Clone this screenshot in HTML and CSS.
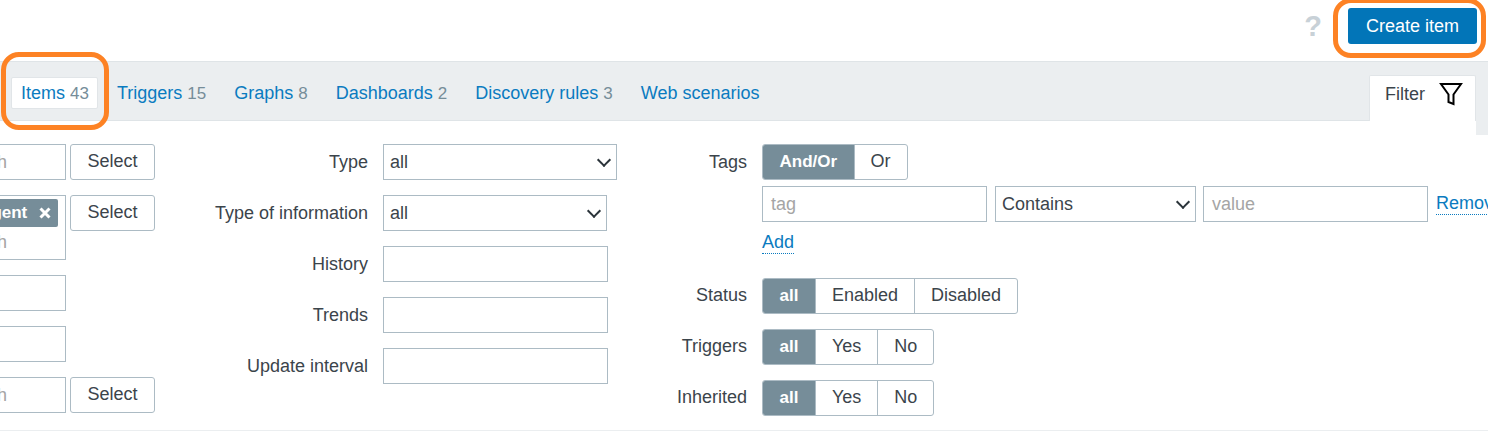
FILE: index.html
```html
<!doctype html>
<html lang="en">
<head>
	<meta charset="utf-8">
	<title>Items</title>
	<link rel="stylesheet" href="styles.css">
</head>
<body>
<header class="topbar">
	<span class="help">?</span>
	<button class="btn-create">Create item</button>
</header>

<nav class="tabs">
	<ul class="host-nav">
		<li class="selected"><a href="#">Items</a> <span>43</span></li>
		<li><a href="#">Triggers</a> <span>15</span></li>
		<li><a href="#">Graphs</a> <span>8</span></li>
		<li><a href="#">Dashboards</a> <span>2</span></li>
		<li><a href="#">Discovery rules</a> <span>3</span></li>
		<li><a href="#">Web scenarios</a></li>
	</ul>
	<div class="filter-tab">
		Filter
		<svg width="24" height="24" viewBox="0 0 24 24"><path d="M2 2h20l-7.500 10.500v9.500l-5-2v-7.500z" fill="none" stroke="#000" stroke-width="2"/></svg>
	</div>
</nav>

<main class="filter">
	<div class="col col-1">
		<div class="row">
			<div class="field">type here to search</div>
			<button class="btn">Select</button>
		</div>
		<div class="row row-multi">
			<div class="field field-multi">
				<span class="chip">Zabbix agent <svg width="12" height="12" viewBox="0 0 12 12"><path d="M1.500 1.500l9 9M10.500 1.500l-9 9" stroke="#fff" stroke-width="3"/></svg></span>
				<span class="ph">type here to search</span>
			</div>
			<button class="btn">Select</button>
		</div>
		<div class="row"><div class="field"></div></div>
		<div class="row"><div class="field"></div></div>
		<div class="row">
			<div class="field">type here to search</div>
			<button class="btn">Select</button>
		</div>
	</div>

	<div class="col col-2">
		<div class="row">
			<label>Type</label>
			<div class="field select select-type">all</div>
		</div>
		<div class="row">
			<label>Type of information</label>
			<div class="field select select-info">all</div>
		</div>
		<div class="row"><label>History</label><div class="field text"></div></div>
		<div class="row"><label>Trends</label><div class="field text"></div></div>
		<div class="row"><label>Update interval</label><div class="field text"></div></div>
	</div>

	<div class="col col-3">
		<div class="row row-tags">
			<label>Tags</label>
			<div class="seg"><span class="on">And/Or</span><span>Or</span></div>
		</div>
		<div class="tag-line">
			<div class="field tag-input ph">tag</div>
			<div class="field select select-op">Contains</div>
			<div class="field tag-input ph">value</div>
			<a class="dotted" href="#">Remove</a>
		</div>
		<div class="add-line"><a class="dotted" href="#">Add</a></div>
		<div class="row"><label>Status</label>
			<div class="seg"><span class="on">all</span><span>Enabled</span><span>Disabled</span></div>
		</div>
		<div class="row"><label>Triggers</label>
			<div class="seg"><span class="on">all</span><span>Yes</span><span>No</span></div>
		</div>
		<div class="row"><label>Inherited</label>
			<div class="seg"><span class="on">all</span><span>Yes</span><span>No</span></div>
		</div>
	</div>
</main>

<!-- orange marks drawn over the screenshot -->
<div class="mark mark-items"></div>
<div class="mark mark-create"></div>
</body>
</html>
```

FILE: styles.css
```css
html, body {
	margin: 0;
	height: 434px;
	overflow: hidden;
}
body {
	position: relative;
	width: 1488px;
	font: 18px/36px "Liberation Sans", Arial, sans-serif;
	color: #3b444b;
	background: #fff;
}
a {
	color: #0a7bc0;
	text-decoration: none;
}

.topbar {
	display: flex;
	justify-content: flex-end;
	align-items: center;
	height: 61px;
	padding: 0 11px 9px 0;
	box-sizing: border-box;
}
.help {
	font-size: 29px;
	font-weight: bold;
	color: #c8d1d7;
	margin-right: 26px;
}
.btn-create {
	width: 129px;
	height: 36px;
	border: 0;
	border-radius: 3px;
	background: #0275b8;
	color: #fff;
	font: inherit;
	padding: 0;
}

.tabs {
	display: flex;
	justify-content: space-between;
	align-items: flex-end;
	position: relative;
	height: 60px;
	box-sizing: border-box;
	background: #ebeef0;
	border-top: 1px solid #dfe4e7;
	border-bottom: 1px solid #dfe4e7;
	padding: 0 12px 0 11px;
}
/* grey runs on past the filter tab */
.tabs::after {
	content: "";
	position: absolute;
	right: 0;
	top: 100%;
	width: 12px;
	height: 15px;
	background: #ebeef0;
}
.host-nav {
	display: flex;
	list-style: none;
	margin: 0 0 11px;
	padding: 0;
}
.host-nav li {
	box-sizing: border-box;
	padding: 0 8px 0 9px;
	height: 32px;
	line-height: 30px;
	margin-right: 9px;
	border: 1px solid transparent;
	border-radius: 2px;
	white-space: nowrap;
}
.host-nav span {
	font-size: 17px;
	color: #768d99;
}
.host-nav .selected {
	background: #fff;
	border-color: #e1e5e8;
}
.filter-tab {
	display: flex;
	align-items: center;
	gap: 14px;
	width: 107px;
	height: 46px;
	box-sizing: border-box;
	padding: 0 0 10px 15px;
	margin-bottom: -1px;
	background: #fff;
	border: 1px solid #e1e5e8;
	border-bottom: 0;
	border-radius: 2px 2px 0 0;
}

.filter {
	display: flex;
	height: 310px;
	box-sizing: border-box;
	padding-top: 23px;
	border-bottom: 1px solid #ebeef0;
}
.row {
	display: flex;
	align-items: flex-start;
	height: 36px;
	margin-bottom: 15px;
	white-space: nowrap;
}
.field {
	flex: none;
	height: 36px;
	box-sizing: border-box;
	border: 1px solid #acbbc4;
	background: #fff;
	line-height: 34px;
	padding: 0 6px;
	position: relative;
	color: #3b444b;
}
.ph {
	color: #a5a5a5;
}
.btn {
	flex: none;
	width: 85px;
	height: 36px;
	margin-left: 4px;
	padding: 0 0 2px;
	border: 1px solid #acbbc4;
	border-radius: 3px;
	background: #fff;
	color: #3b444b;
	font: inherit;
	line-height: 32px;
}

/* the first column runs off the left edge of the window */
.col-1 {
	width: 155px;
	flex: none;
}
.col-1 .field {
	width: 300px;
	margin-left: -234px;
	padding-right: 58px;
	color: #a5a5a5;
	text-align: right;
}
.col-1 .row-multi {
	height: 65px;
	margin-bottom: 15px;
}
.col-1 .field-multi {
	height: 65px;
	line-height: 30px;
	padding: 3px 0 0;
}
.chip {
	display: block;
	height: 28px;
	margin: 0 7px 0 0;
	padding-right: 7px;
	font-size: 17px;
	line-height: 28px;
	border-radius: 2px;
	background: #768d99;
	color: #fff;
	font-weight: bold;
}
.chip svg {
	margin-left: 7px;
	vertical-align: -1px;
}
.field-multi .ph {
	display: block;
	padding-right: 58px;
}

.col-2 {
	flex: none;
	width: 453px;
}
.col-2 label {
	width: 213px;
	flex: none;
	margin-right: 15px;
	text-align: right;
}
.select::after {
	content: "";
	position: absolute;
	right: 7px;
	top: 10px;
	width: 8px;
	height: 8px;
	border: solid #2b343a;
	border-width: 0 2px 2px 0;
	transform: rotate(45deg);
}
.select-type { width: 234px; }
.select-info { width: 224px; }
.text { width: 225px; }

.col-3 {
	flex: none;
	width: 880px;
}
.col-3 label {
	width: 139px;
	flex: none;
	margin-right: 15px;
	line-height: 34px;
	text-align: right;
}
.col-3 .row-tags label {
	line-height: 36px;
}
.row-tags {
	margin-bottom: 6px;
}
.seg {
	display: flex;
	height: 36px;
	box-sizing: border-box;
	border: 1px solid #acbbc4;
	border-radius: 3px;
	overflow: hidden;
	line-height: 33px;
}
.seg span {
	padding: 0 16px;
	border-left: 1px solid #acbbc4;
}
.seg span:first-child {
	border-left: 0;
}
.seg .on {
	padding: 0 16.500px;
	font-size: 17px;
	background: #768d99;
	color: #fff;
	font-weight: bold;
}
.tag-line {
	display: flex;
	align-items: flex-start;
	gap: 8px;
	margin-left: 154px;
}
.tag-input {
	width: 225px;
	padding-left: 8px;
}
.select-op {
	width: 201px;
	margin-right: -1px;
}
.dotted {
	display: inline-block;
	height: 28px;
	line-height: 34px;
	border-bottom: 1px dotted #0a7bc0;
}
.add-line {
	margin: 2px 0 27px 154px;
	height: 27px;
}
.add-line .dotted {
	height: 26px;
	line-height: 30px;
}

.mark {
	position: absolute;
	box-sizing: border-box;
	border: 5px solid #fd8224;
	border-radius: 18px;
}
.mark-items {
	left: 1px;
	top: 52px;
	width: 108px;
	height: 78px;
}
.mark-create {
	left: 1333px;
	top: -2px;
	width: 153px;
	height: 60px;
}
```
